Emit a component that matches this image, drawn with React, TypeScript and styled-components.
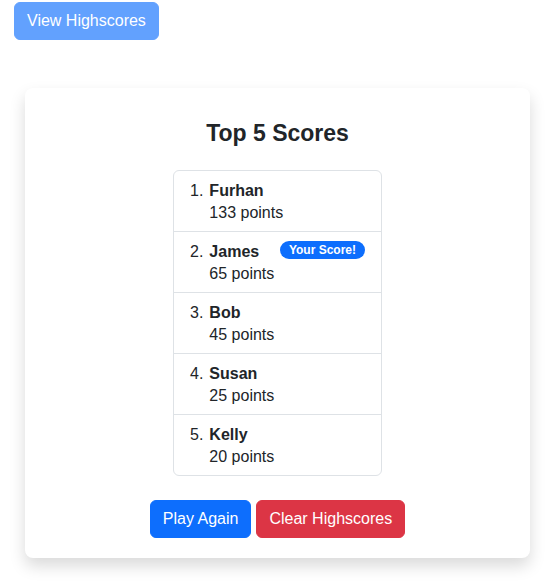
import React from "react";
import styled, { createGlobalStyle } from "styled-components";

const GlobalStyle = createGlobalStyle`
  html, body { margin: 0; padding: 0; background: #fff; }
  body {
    font-family: "Liberation Sans", Arial, sans-serif;
    font-size: 16px;
    line-height: 1.5;
    color: #212529;
  }
  * { box-sizing: border-box; }
`;

const Page = styled.div`
  padding: 2px 26px 24px 14px;
`;

const TopBar = styled.div`
  display: flex;
`;

const Button = styled.button<{ $variant: "primary" | "danger" | "faded" }>`
  font-family: inherit;
  font-size: 16px;
  line-height: 24px;
  padding: 6px 12px;
  border-radius: 6px;
  border: 1px solid
    ${(p) => (p.$variant === "danger" ? "#dc3545" : p.$variant === "faded" ? "#62a1fe" : "#0d6efd")};
  background: ${(p) => (p.$variant === "danger" ? "#dc3545" : p.$variant === "faded" ? "#62a1fe" : "#0d6efd")};
  color: #fff;
  cursor: pointer;
`;

const Card = styled.section`
  margin: 48px 0 0 11px;
  background: #fff;
  border-radius: 8px;
  box-shadow: 0 8px 16px rgba(0, 0, 0, 0.15);
  padding: 31px 24px 20px;
  display: flex;
  flex-direction: column;
  align-items: center;
`;

const Title = styled.h2`
  margin: 0 0 22px;
  font-size: 23px;
  line-height: 29px;
  font-weight: 700;
`;

const List = styled.ol`
  list-style: none;
  margin: 0 0 24px;
  padding: 0;
  width: 209px;
  border: 1px solid #dee2e6;
  border-radius: 6px;
`;

const Item = styled.li`
  display: flex;
  align-items: flex-start;
  padding: 9px 16px 7px;
  line-height: 22px;
  & + & {
    border-top: 1px solid #dee2e6;
  }
`;

const Rank = styled.span`
  flex: none;
`;

const Info = styled.div`
  margin-left: 6px;
  margin-right: auto;
  display: flex;
  flex-direction: column;
`;

const Name = styled.span`
  font-weight: 700;
`;

const Badge = styled.span`
  display: inline-block;
  padding: 3px 9px;
  font-size: 12px;
  line-height: 12px;
  font-weight: 700;
  color: #fff;
  background: #0d6efd;
  border-radius: 999px;
`;

const Actions = styled.div`
  display: flex;
  gap: 5px;
  justify-content: center;
`;

const scores = [
  { name: "Furhan", points: 133 },
  { name: "James", points: 65, mine: true },
  { name: "Bob", points: 45 },
  { name: "Susan", points: 25 },
  { name: "Kelly", points: 20 },
];

export default function App() {
  return (
    <>
      <GlobalStyle />
      <Page>
        <TopBar>
          <Button $variant="faded">View Highscores</Button>
        </TopBar>
        <Card>
          <Title>Top 5 Scores</Title>
          <List>
            {scores.map((s, i) => (
              <Item key={s.name}>
                <Rank>{i + 1}.</Rank>
                <Info>
                  <Name>{s.name}</Name>
                  <span>{s.points} points</span>
                </Info>
                {s.mine && <Badge>Your Score!</Badge>}
              </Item>
            ))}
          </List>
          <Actions>
            <Button $variant="primary">Play Again</Button>
            <Button $variant="danger">Clear Highscores</Button>
          </Actions>
        </Card>
      </Page>
    </>
  );
}
